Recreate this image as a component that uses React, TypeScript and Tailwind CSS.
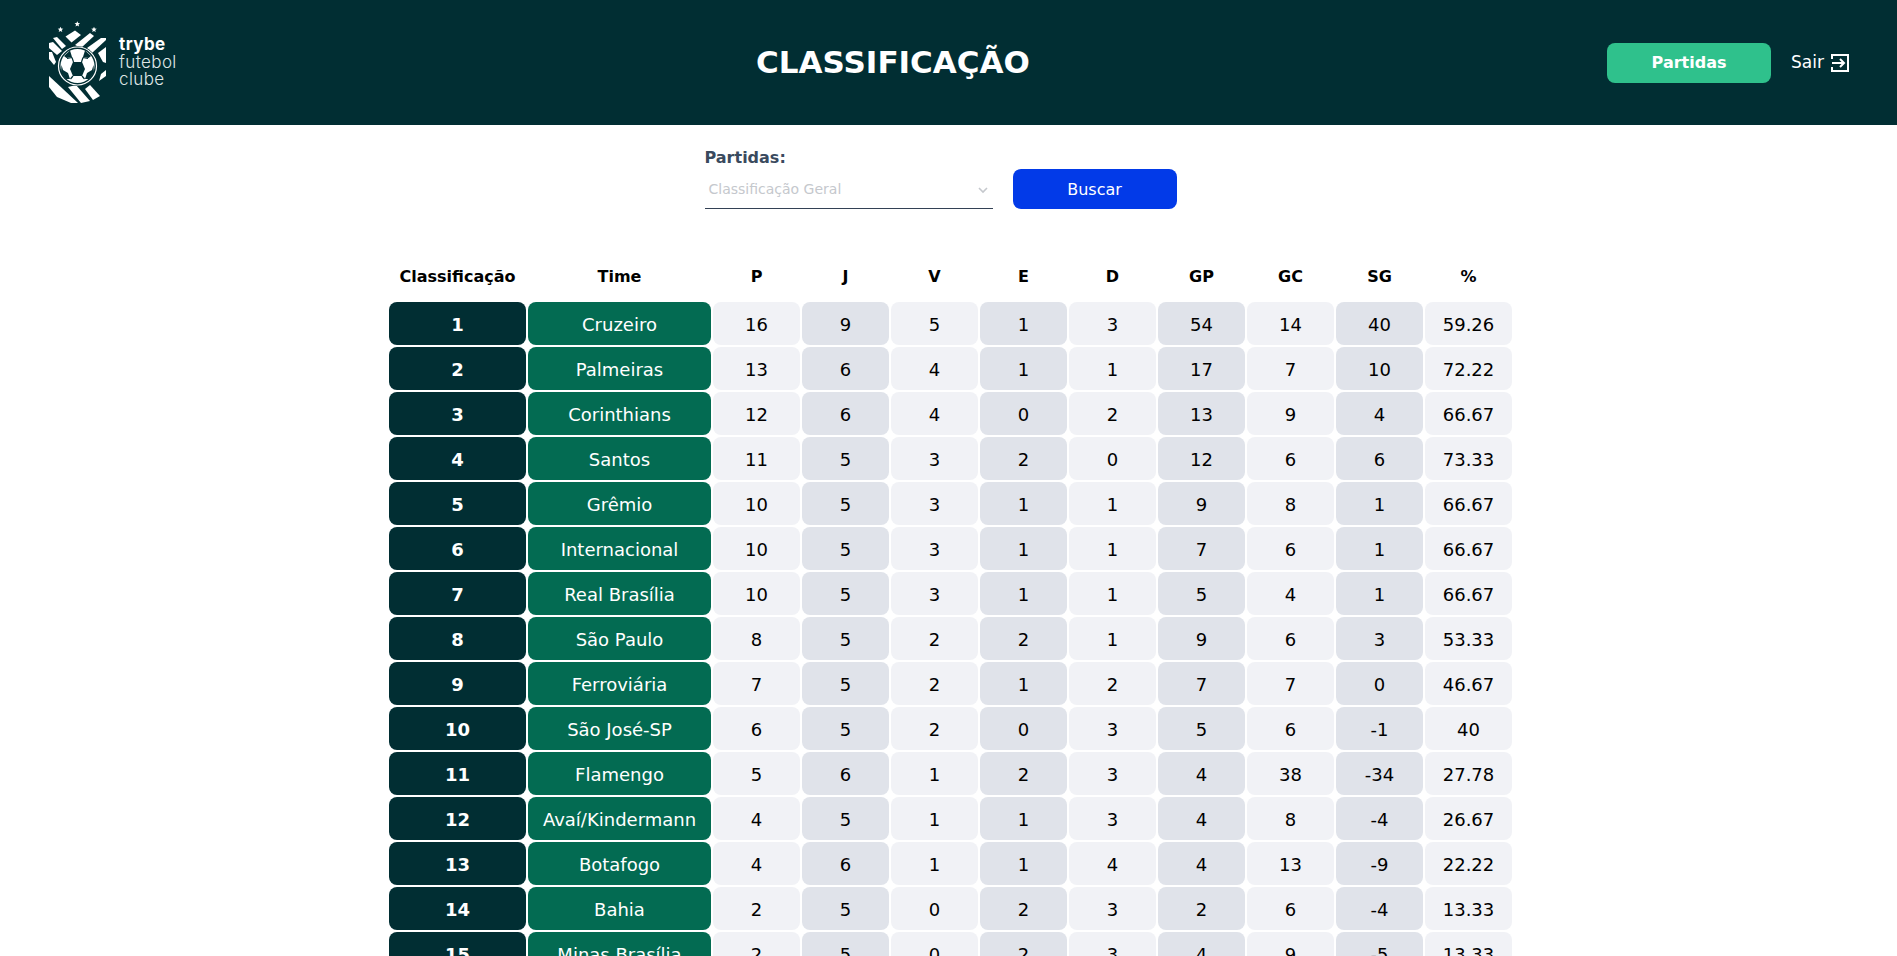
import React from 'react';

const rows: (string | number)[][] = [
  [1, 'Cruzeiro', 16, 9, 5, 1, 3, 54, 14, 40, 59.26],
  [2, 'Palmeiras', 13, 6, 4, 1, 1, 17, 7, 10, 72.22],
  [3, 'Corinthians', 12, 6, 4, 0, 2, 13, 9, 4, 66.67],
  [4, 'Santos', 11, 5, 3, 2, 0, 12, 6, 6, 73.33],
  [5, 'Grêmio', 10, 5, 3, 1, 1, 9, 8, 1, 66.67],
  [6, 'Internacional', 10, 5, 3, 1, 1, 7, 6, 1, 66.67],
  [7, 'Real Brasília', 10, 5, 3, 1, 1, 5, 4, 1, 66.67],
  [8, 'São Paulo', 8, 5, 2, 2, 1, 9, 6, 3, 53.33],
  [9, 'Ferroviária', 7, 5, 2, 1, 2, 7, 7, 0, 46.67],
  [10, 'São José-SP', 6, 5, 2, 0, 3, 5, 6, -1, 40],
  [11, 'Flamengo', 5, 6, 1, 2, 3, 4, 38, -34, 27.78],
  [12, 'Avaí/Kindermann', 4, 5, 1, 1, 3, 4, 8, -4, 26.67],
  [13, 'Botafogo', 4, 6, 1, 1, 4, 4, 13, -9, 22.22],
  [14, 'Bahia', 2, 5, 0, 2, 3, 2, 6, -4, 13.33],
  [15, 'Minas Brasília', 2, 5, 0, 2, 3, 4, 9, -5, 13.33],
];

const headers = ['Classificação', 'Time', 'P', 'J', 'V', 'E', 'D', 'GP', 'GC', 'SG', '%'];

function Star({ x, y }: { x: number; y: number }) {
  return (
    <polygon
      transform={`translate(${x} ${y})`}
      points="0,-2.8 0.8,-0.9 2.8,-0.8 1.2,0.5 1.8,2.5 0,1.4 -1.8,2.5 -1.2,0.5 -2.8,-0.8 -0.8,-0.9"
    />
  );
}

function Logo() {
  return (
    <svg width="58" height="83" viewBox="0 0 58 83" fill="#fff">
      <Star x={11.5} y={8.5} />
      <Star x={28.3} y={3} />
      <Star x={45} y={8.5} />
      {/* stripes */}
      <polygon points="16.5,15.5 26,9.5 32,14 22.5,21.5" />
      <polygon points="26,24 41,12 45,15 32,27" />
      <polygon points="38,27 52,17 57,17 57,19 43,32" />
      <polygon points="49,32 57,26 57,42 54,41" />
      <polygon points="4,17 8,16 17,25 13,28" />
      <polygon points="0,22 4,21 13,30 8,34 0,27" />
      <polygon points="0,31 3,31 7,41 5,44 0,38" />
      <polygon points="52,53 57,49 57,55 50,60" />
      <polygon points="0,55 14,68 29,82 22,82 8,76 0,66" />
      <polygon points="36,68 41,64 51,75 44,79" />
      <polygon points="19,66 27,64 41,80 32,82" />
      {/* ball */}
      <circle cx="28.5" cy="45" r="20" fill="#012e33" />
      <circle cx="28.5" cy="45" r="19" fill="none" stroke="#fff" strokeWidth="1.2" />
      <circle cx="28.5" cy="45" r="17" />
      <path d="M24 41 L33 41 L36 48 L33 55 L24 55 L21 48Z" fill="#012e33" />
      <path d="M21 29.5 L15 35 L17.5 37 L23 36Z M36 29.5 L42 35 L39.5 37 L34 36Z" fill="#012e33" />
      <path d="M14 49 L12.5 44 L12 52 L17 58 L21 58 L19 52Z M43 49 L44.5 44 L45 52 L40 58 L36 58 L38 52Z" fill="#012e33" />
      <path d="M23 36.5 L24.5 41 M34 36.5 L32.5 41 M23 36.5 L18 37.5 M34 36.5 L39 37.5 M24 55 L21.5 58 M33 55 L35.5 58" fill="none" stroke="#012e33" strokeWidth="1.2" />
    </svg>
  );
}

export default function App() {
  return (
    <div className="h-screen overflow-hidden bg-white font-['DejaVu_Sans',Verdana,sans-serif]">
      <header className="h-[125px] bg-[#012e33] flex items-center justify-between pl-[49px] pr-[48px]">
        <div className="flex items-center gap-[12px] w-[130px] whitespace-nowrap">
          <Logo />
          <div className="text-[#dfe6e6] text-[17px] tracking-[0.4px] leading-[17.5px] font-['Inter',sans-serif] font-light">
            <div className="font-bold text-white">trybe</div>
            <div>futebol</div>
            <div>clube</div>
          </div>
        </div>
        <h1 className="text-white font-bold text-[31px]">CLASSIFICAÇÃO</h1>
        <div className="flex items-center gap-[20px]">
          <button className="w-[164px] h-[40px] rounded-lg bg-[#2fc18c] text-white font-bold text-[16px]">Partidas</button>
          <div className="flex items-center gap-[7px] text-white text-[17px]">
            Sair
            <svg width="18" height="18" viewBox="0 0 18 18" fill="none" stroke="#fff" strokeWidth="2">
              <path d="M1 5V1h16v16H1v-4" />
              <path d="M1 9h12M9 5l4 4-4 4" />
            </svg>
          </div>
        </div>
      </header>

      <form className="flex justify-center items-end gap-[20px] mt-[23px] mb-[40px] pr-[16px]">
        <div className="w-[288px]">
          <div className="text-[#3a4a5e] font-bold text-[16px] leading-[20px] mb-[1px]">Partidas:</div>
          <div className="h-[40px] border-b border-[#334155] flex items-center justify-between pl-[4px] pr-[3px] pt-[2px] text-[14px] text-[#c5c8cd]">
            Classificação Geral
            <svg width="14" height="14" viewBox="0 0 14 14" fill="none" stroke="#c5c8cd" strokeWidth="1.6">
              <path d="M3 5l4 4 4-4" />
            </svg>
          </div>
        </div>
        <button type="button" className="w-[164px] h-[40px] rounded-lg bg-[#023ae8] text-white text-[16px] pt-[1px]">Buscar</button>
      </form>

      <div className="flex justify-center pl-[4px]">
        <table className="w-[1127px] table-fixed border-separate border-spacing-[2px] text-[18px] text-center text-black">
          <colgroup>
            <col className="w-[137px]" />
            <col className="w-[183px]" />
          </colgroup>
          <thead>
            <tr className="h-[49px] text-[16px]">
              {headers.map((h) => (
                <th key={h} className="font-bold pt-[2px]">{h}</th>
              ))}
            </tr>
          </thead>
          <tbody>
            {rows.map((row) => (
              <tr key={row[0]} className="h-[43px]">
                {row.map((cell, i) => {
                  if (i === 0) {
                    return <td key={i} className="rounded-lg bg-[#012e33] text-white font-bold pt-[2px]">{cell}</td>;
                  }
                  if (i === 1) {
                    return <td key={i} className="rounded-lg bg-[#036b52] text-white pt-[2px]">{cell}</td>;
                  }
                  return (
                    <td key={i} className={`rounded-lg pt-[2px] ${i % 2 === 0 ? 'bg-[#f1f2f6]' : 'bg-[#e0e3ea]'}`}>{cell}</td>
                  );
                })}
              </tr>
            ))}
          </tbody>
        </table>
      </div>
    </div>
  );
}
